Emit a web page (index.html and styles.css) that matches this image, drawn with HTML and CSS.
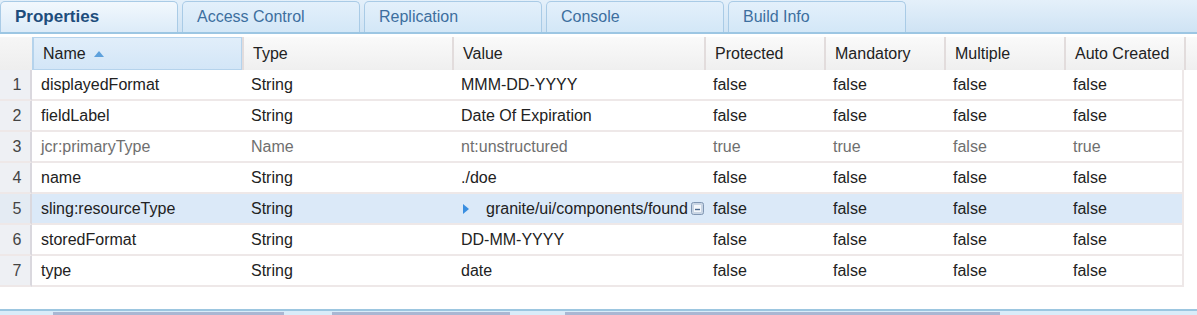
FILE: index.html
```html
<!DOCTYPE html>
<html lang="en">
<head>
    <meta charset="UTF-8">
    <title>CRXDE Properties</title>
    <link rel="stylesheet" href="styles.css">
</head>
<body>
    <div class="panel">
        <div class="tabs">
            <div class="tab active">Properties</div>
            <div class="tab">Access Control</div>
            <div class="tab">Replication</div>
            <div class="tab">Console</div>
            <div class="tab">Build Info</div>
        </div>

        <table class="grid">
            <colgroup>
                <col class="c-num"><col class="c-wide"><col class="c-wide"><col class="c-value">
                <col class="c-flag"><col class="c-flag"><col class="c-flag"><col class="c-flag"><col class="c-fill">
            </colgroup>
            <thead>
                <tr>
                    <th class="num"></th>
                    <th class="sorted">Name <span class="sort-arrow"></span></th>
                    <th>Type</th>
                    <th>Value</th>
                    <th>Protected</th>
                    <th>Mandatory</th>
                    <th>Multiple</th>
                    <th>Auto Created</th>
                    <th class="fill"></th>
                </tr>
            </thead>
            <tbody>
                <tr>
                    <td class="num">1</td><td>displayedFormat</td><td>String</td><td>MMM-DD-YYYY</td>
                    <td>false</td><td>false</td><td>false</td><td>false</td><td class="fill"></td>
                </tr>
                <tr>
                    <td class="num">2</td><td>fieldLabel</td><td>String</td><td>Date Of Expiration</td>
                    <td>false</td><td>false</td><td>false</td><td>false</td><td class="fill"></td>
                </tr>
                <tr class="protected">
                    <td class="num">3</td><td>jcr:primaryType</td><td>Name</td><td>nt:unstructured</td>
                    <td>true</td><td>true</td><td>false</td><td>true</td><td class="fill"></td>
                </tr>
                <tr>
                    <td class="num">4</td><td>name</td><td>String</td><td>./doe</td>
                    <td>false</td><td>false</td><td>false</td><td>false</td><td class="fill"></td>
                </tr>
                <tr class="selected">
                    <td class="num">5</td><td>sling:resourceType</td><td>String</td>
                    <td class="value-cell">
                        <div class="value-wrap">
                            <svg class="expand" width="8" height="10" viewBox="0 0 8 10"><polygon points="1,0 7,5 1,10" fill="#3a8ee0"/></svg>
                            <span class="value-text">granite/ui/components/found</span>
                            <svg class="multi-edit" width="13" height="13" viewBox="0 0 13 13">
                                <rect x="0.5" y="0.5" width="12" height="12" rx="2" fill="#c9d5e4" stroke="#8096b3"/>
                                <rect x="3" y="3" width="7" height="7" fill="#f4f7fb"/>
                                <line x1="4" y1="7.5" x2="9" y2="7.5" stroke="#4d6a8f" stroke-width="1.4"/>
                            </svg>
                        </div>
                    </td>
                    <td>false</td><td>false</td><td>false</td><td>false</td><td class="fill"></td>
                </tr>
                <tr>
                    <td class="num">6</td><td>storedFormat</td><td>String</td><td>DD-MM-YYYY</td>
                    <td>false</td><td>false</td><td>false</td><td>false</td><td class="fill"></td>
                </tr>
                <tr>
                    <td class="num">7</td><td>type</td><td>String</td><td>date</td>
                    <td>false</td><td>false</td><td>false</td><td>false</td><td class="fill"></td>
                </tr>
            </tbody>
        </table>
    </div>

    <div class="bottom-strip">
        <span class="gap" style="width:53px"></span>
        <span class="bar" style="width:231px"></span>
        <span class="gap" style="width:48px"></span>
        <span class="bar" style="width:178px"></span>
        <span class="gap" style="width:55px"></span>
        <span class="bar" style="width:435px"></span>
    </div>
</body>
</html>
```

FILE: styles.css
```css
body {
    margin: 0;
    width: 1197px;
    height: 315px;
    overflow: hidden;
    background-color: #fff;
    font-family: "Liberation Sans", Arial, sans-serif;
    color: #222;
    position: relative;
}

.panel {
    height: 309px;
}

/* tab strip */
.tabs {
    display: flex;
    gap: 4px;
    height: 34px;
    padding-top: 1px;
    box-sizing: border-box;
    background: linear-gradient(#e4f0fa, #cfe3f4);
    border-bottom: 2px solid #9cc6e3;
    margin-bottom: 3px;
}

.tab {
    width: 178px;
    box-sizing: border-box;
    height: 31px;
    padding-left: 14px;
    border: 1px solid #a9cbe6;
    border-bottom: none;
    border-radius: 5px 5px 0 0;
    background: linear-gradient(#e3f0fb, #d3e7f7);
    color: #3d6f9f;
    font-size: 16px;
    line-height: 30px;
}

.tab.active {
    background: linear-gradient(#f2f8fd, #dcebf8);
    color: #1d4d7c;
    font-weight: bold;
    font-size: 17px;
}

/* grid */
.grid {
    border-collapse: separate;
    border-spacing: 0;
    table-layout: fixed;
    width: 1197px;
    font-size: 16px;
}

.c-num { width: 32px; }
.c-wide { width: 210px; }
.c-value { width: 252px; }
.c-flag { width: 120px; }
.c-fill { width: 13px; }

.grid th {
    height: 33px;
    box-sizing: border-box;
    padding: 0 9px;
    text-align: left;
    font-weight: normal;
    background: linear-gradient(#fafafa, #efefef);
    border-left: 2px solid #e2dcdc;
    white-space: nowrap;
}

.grid th.num {
    border-left: none;
    background: linear-gradient(#f6f6f6, #eeeeee);
}

.grid th.sorted {
    background: linear-gradient(#e1eefa, #d3e6f7);
    border: 1px solid #b5d3ec;
    border-left: 2px solid #b5d3ec;
}

.sort-arrow {
    display: inline-block;
    width: 0;
    height: 0;
    margin-left: 4px;
    vertical-align: 2px;
    border-left: 5px solid transparent;
    border-right: 5px solid transparent;
    border-bottom: 6px solid #5ea1dc;
}

.grid td {
    height: 31px;
    box-sizing: border-box;
    padding: 0 9px;
    border-bottom: 2px solid #eee8e8;
    white-space: nowrap;
    overflow: hidden;
    background-color: #fff;
}

.grid td.num {
    padding: 0 0 0 4px;
    text-align: center;
    color: #444;
    background-color: #eef0f4;
    border-right: 2px solid #dad8de;
}

.grid td:nth-child(8) {
    border-right: 2px solid #eee8e8;
}

.grid td.fill {
    background: #fff;
    border-bottom: none;
}

.protected td {
    color: #6f6f6f;
}

.selected td {
    background-color: #dbe9f8;
}

.selected td.num {
    background-color: #e4ebf3;
}

.value-cell {
    padding-right: 0 !important;
}

.value-wrap {
    display: flex;
    align-items: center;
    min-width: 0;
}

.expand {
    flex: none;
    margin-left: 1px;
    margin-right: 16px;
}

.value-text {
    flex: 1;
    min-width: 0;
    overflow: hidden;
    white-space: nowrap;
}

.multi-edit {
    flex: none;
}

/* bottom edge of the next panel */
.bottom-strip {
    position: absolute;
    left: 0;
    right: 0;
    top: 309px;
    height: 6px;
    display: flex;
    align-items: flex-end;
    border-top: 2px solid #9cc6e0;
    box-sizing: border-box;
    background-color: #d9ecf9;
}

.bottom-strip .bar {
    height: 3px;
    background-color: #a9b7d3;
}
```
